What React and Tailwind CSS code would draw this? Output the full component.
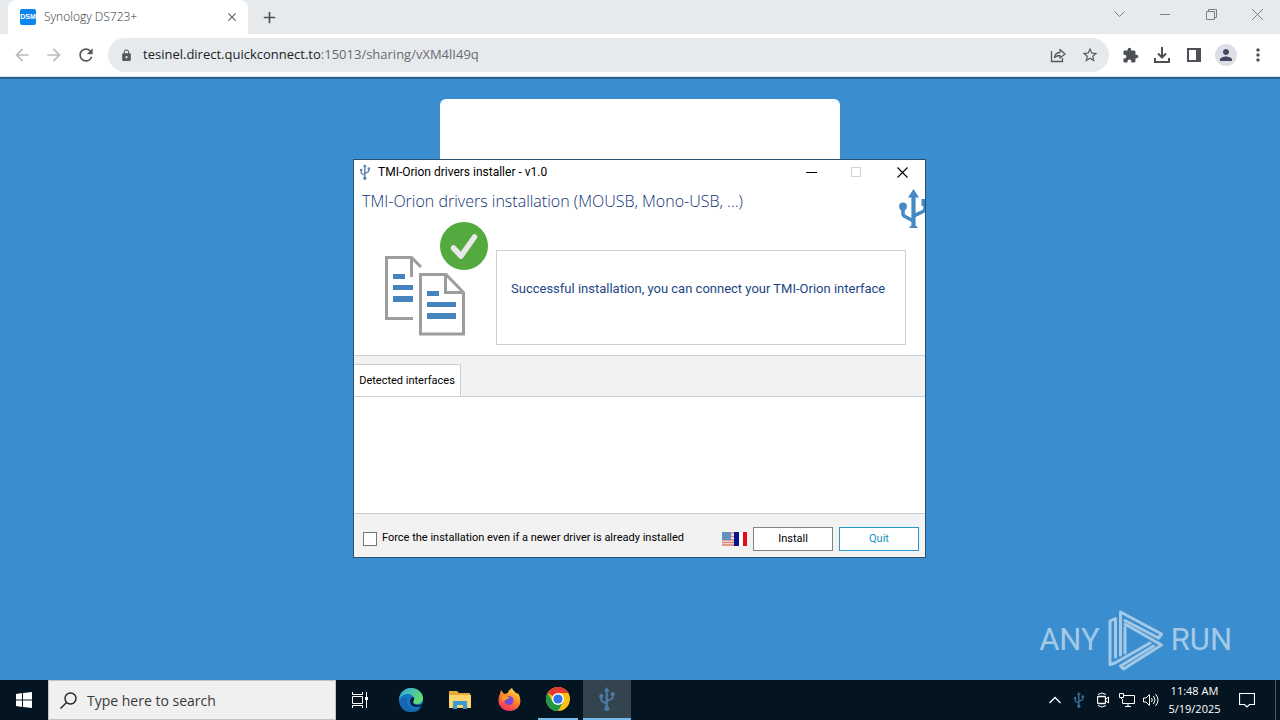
import { Plus } from 'lucide-react';
import {
  MdArrowBack, MdArrowForward, MdClose, MdExtension, MdLock, MdMoreVert, MdPerson, MdRefresh, MdStarBorder
} from 'react-icons/md';

const UsbIcon = ({ className, viewBox = '0 0 30 46' }) => (
  <svg className={className} viewBox={viewBox} fill="none" stroke="currentColor" strokeWidth="3.6">
    <path d="M14.500 7V40" strokeWidth="4.2" />
    <path d="M14.500 0l5.500 8.500H9z" fill="currentColor" stroke="none" />
    <path d="M4 18v6.500q0 2 2 3l8.500 4.500M26 16v3.500q0 2-2 3L14.500 27" />
    <circle cx="4" cy="17.500" r="3.900" fill="currentColor" stroke="none" />
    <path d="M22.500 10h7v7h-7z" fill="currentColor" stroke="none" />
    <circle cx="14.500" cy="41" r="4.800" fill="currentColor" stroke="none" />
  </svg>
);

const TabStrip = () => (
  <div className="flex h-[34px] bg-[#e7eaed] pl-2">
    <div className="flex w-[240px] items-center rounded-t-lg bg-white pl-3 pr-[9px]">
      <span className="flex size-4 items-center justify-center rounded-xs bg-[#0b84ee] font-['Liberation_Sans'] text-[7px] font-bold text-white">DSM</span>
      <span className="ml-2 flex-1 font-['Open_Sans',sans-serif] text-[12px] font-light text-[#303438]">Synology DS723+</span>
      <button aria-label="Close tab" className="text-[#5f6368]"><MdClose size={14} /></button>
    </div>
    <button aria-label="New tab" className="ml-[13px] text-[#4d5155]"><Plus size={17} strokeWidth={2.4} /></button>
    <div className="ml-auto flex h-7 items-stretch text-[#7d8084]">
      <button aria-label="Search tabs" className="flex w-[46px] items-center justify-center"><svg className="h-[6px] w-[11px]" viewBox="0 0 11 6"><path d="M.5 .5l5 5 5-5" fill="none" stroke="currentColor" /></svg></button>
      <button aria-label="Minimize" className="flex w-[46px] items-center justify-center"><svg className="size-[10px]" viewBox="0 0 10 10"><path d="M0 5.500h10" stroke="currentColor" /></svg></button>
      <button aria-label="Restore" className="flex w-[46px] items-center justify-center">
        <svg className="size-[11px]" viewBox="0 0 11 11" fill="none" stroke="currentColor"><path d="M.5 2.500h8v8h-8zM2.500 2.500v-2h8v8h-2" /></svg>
      </button>
      <button aria-label="Close" className="flex w-[46px] items-center justify-center"><svg className="size-[11px]" viewBox="0 0 11 11"><path d="M0 0l11 11M11 0L0 11" stroke="currentColor" /></svg></button>
    </div>
  </div>
);

const Toolbar = () => (
  <div className="flex h-[43px] items-center border-b border-[#d5e3ec] bg-white pl-3 pr-3">
    <button aria-label="Back" className="text-[#babcbe]"><MdArrowBack size={20} /></button>
    <button aria-label="Forward" className="ml-3 text-[#babcbe]"><MdArrowForward size={20} /></button>
    <button aria-label="Reload" className="ml-3 text-[#55595d]"><MdRefresh size={20} /></button>
    <div className="ml-3 flex h-[34px] flex-1 items-center rounded-full bg-[#e7eaed] pl-3 pr-[10px] text-[#55595d]">
      <MdLock size={13} />
      <div className="ml-[10px] flex-1 font-['Open_Sans',sans-serif] text-[13px] text-[#676b70]">
        <span className="text-[#202124]">tesinel.direct.quickconnect.to</span>:15013/sharing/vXM4lI49q
      </div>
      <button aria-label="Share">
        <svg className="size-4" viewBox="0 0 16 16" fill="none" stroke="currentColor" strokeWidth="1.3">
          <path d="M1.500 4v10.500h11V11" />
          <path d="M4.500 10.500c.5-3.500 2.500-5 5.500-5V2.500l5 4.500-5 4V8.500c-2.500 0-4 .5-5.500 2z" strokeLinejoin="round" />
        </svg>
      </button>
      <button aria-label="Bookmark" className="ml-[15px]"><MdStarBorder size={18} /></button>
    </div>
    <div className="ml-[13px] flex items-center text-[#4d5155]">
      <button aria-label="Extensions"><MdExtension size={17} /></button>
      <button aria-label="Downloads" className="ml-[15px]">
        <svg className="size-4" viewBox="0 0 16 16" fill="none" stroke="currentColor" strokeWidth="2"><path d="M8 0v10M4 6.500l4 4 4-4M1 11v4h14v-4" /></svg>
      </button>
      <button aria-label="Side panel" className="ml-[17px]">
        <svg className="size-[14px]" viewBox="0 0 14 14"><path d="M1 1h12v12H1z" fill="none" stroke="currentColor" strokeWidth="2" /><path d="M9 1h4v12H9z" fill="currentColor" /></svg>
      </button>
      <button aria-label="Profile" className="ml-[14px] flex size-[22px] items-center justify-center rounded-full bg-[#dcdfe6] text-[#42465e]"><MdPerson size={18} /></button>
      <button aria-label="Menu" className="ml-[11px]"><MdMoreVert size={20} /></button>
    </div>
  </div>
);

const DocsIcon = () => (
  <svg className="h-[116px] w-[104px]" viewBox="0 0 104 116" fill="none">
    <path d="M28 96.500H1.500v-61h25L36 45M26.500 36v19" stroke="#9d9d9d" strokeWidth="3" />
    <path d="M35.500 52.500h25.500l17.500 18v41.500h-43zM60.500 53v17.500h18" stroke="#9d9d9d" strokeWidth="3" />
    <path d="M8 52h12v5H8zM8 63h20v5H8zM8 74h20v6H8zM42 69h12v5H42zM42 80h29v5H42zM42 91h29v6H42z" fill="#4584be" />
    <circle cx="79" cy="24" r="24" fill="#54a93f" />
    <path d="M68.500 26l7.500 8L89.500 15" stroke="#e9e9e9" strokeWidth="5.500" strokeLinecap="round" strokeLinejoin="round" />
  </svg>
);

const Flags = () => (
  <svg className="h-[14px] w-[25px]" viewBox="0 0 25 14">
    <path d="M0 0h12v14H0z" fill="#f4e9e6" />
    <path d="M0 1h12M0 4.500h12M0 8h12M0 10.500h12M0 13h12" stroke="#dc8277" strokeWidth="1.300" />
    <path d="M0 0h9v8H0z" fill="#5f93bd" />
    <path d="M12 0h5v14h-5z" fill="#071689" />
    <path d="M17 0h4v14h-4z" fill="#fff" />
    <path d="M21 0h4v14h-4z" fill="#e90a17" />
  </svg>
);

const InstallerWindow = () => (
  <div className="absolute left-[353px] top-[159px] flex h-[399px] w-[573px] flex-col overflow-hidden border border-[#27506f] bg-white font-['Roboto',sans-serif] text-[11px] text-black">
    <div className="flex h-6 items-center pl-1 pr-[17px] text-[12px]">
      <UsbIcon className="h-4 w-[14px] text-[#5f83a8]" />
      <span className="ml-[6px] flex-1">TMI-Orion drivers installer - v1.0</span>
      <button aria-label="Minimize"><svg className="h-[11px] w-[11px]" viewBox="0 0 11 11"><path d="M0 5.500h11" stroke="currentColor" /></svg></button>
      <button aria-label="Maximize" disabled className="ml-[34px] text-[#cfcfcf]"><svg className="size-[11px]" viewBox="0 0 11 11"><path d="M.5 .5h9v9h-9z" fill="none" stroke="currentColor" /></svg></button>
      <button aria-label="Close" className="ml-[35px]"><svg className="size-[11px]" viewBox="0 0 11 11"><path d="M.5 .5l10 10M10.500 .5l-10 10" stroke="currentColor" strokeWidth="1.100" /></svg></button>
    </div>
    <div className="flex h-[38px] items-start justify-between pl-2">
      <h1 className="pt-[5px] font-['Open_Sans',sans-serif] text-[16px] font-light leading-6 text-[#0f3274]">TMI-Orion drivers installation (MOUSB, Mono-USB, ...)</h1>
      <UsbIcon className="mt-[5px] h-[39px] w-[26px] shrink-0 text-[#4789c4]" viewBox="0 0 26 39" />
    </div>
    <div className="flex h-[133px] pl-[31px] pr-[19px]">
      <DocsIcon />
      <div className="ml-[7px] mt-7 flex h-[95px] flex-1 items-center border border-[#cdd0d2] pb-[18px] pl-[14px] text-[13px] text-[#1c4686]">
        <p className="whitespace-nowrap">Successful installation, you can connect your TMI-Orion interface</p>
      </div>
    </div>
    <div className="flex h-[42px] items-end border-y border-[#c9d2d5] bg-[#f2f2f2]">
      <button className="-mb-px h-[33px] w-[107px] whitespace-nowrap border-r border-t border-[#cbcdce] border-b-[#c9d2d5] border-b bg-white pt-[2px]">Detected interfaces</button>
    </div>
    <div className="flex-1 bg-white" />
    <div className="flex h-11 items-center border-t border-[#c9cdcf] bg-[#f2f2f2] pl-[9px] pr-[6px] pt-[6px]">
      <label className="flex flex-1 items-center gap-[5px] whitespace-nowrap">
        <input type="checkbox" className="size-[14px] appearance-none border border-[#777] bg-white" />
        Force the installation even if a newer driver is already installed
      </label>
      <Flags />
      <button className="ml-[6px] h-6 w-20 border border-[#7b848a] bg-white pt-[2px]">Install</button>
      <button className="ml-[6px] h-6 w-20 border border-[#2798c8] bg-white pt-[2px] text-[#2590c0]">Quit</button>
    </div>
  </div>
);

const Watermark = () => (
  <div className="absolute bottom-[9px] right-[48px] flex h-[61px] items-center gap-2 font-['Roboto',sans-serif] text-[31px] text-[#a3c9e7]">
    <span>ANY</span>
    <svg className="h-[61px] w-[55px]" viewBox="0 0 55 61" fill="none" stroke="currentColor" strokeWidth="3" strokeLinejoin="round" strokeLinecap="round">
      <path d="M7.500 8.500L2 11v43.500l5-1.500 35-20M7.500 9v38" />
      <path d="M12.500 45V2L53.500 24l-3 4-33.500-17.500" />
      <path d="M17 17v26M17 14l36.500 21L15.500 59l-3-3 33-20" />
    </svg>
    <span>RUN</span>
  </div>
);

const EdgeIcon = () => (
  <svg className="size-6" viewBox="0 0 24 24">
    <defs>
      <linearGradient id="edgeTop" x1="0" y1="0" x2="1" y2=".5"><stop offset="0" stopColor="#2aa7e8" /><stop offset="1" stopColor="#62dc72" /></linearGradient>
    </defs>
    <circle cx="12" cy="12" r="12" fill="#1475c6" />
    <path d="M0 11C1 4 6 0 12 0c7 0 12 5 12 10 0 4-3 6-6 6-3 0-4-1-4-2s1-1 1-3c0-3-3-5-6-5-4 0-7 2-9 5z" fill="url(#edgeTop)" />
    <path d="M9 10c-3 5 1 12 8 12 2 0 4-1 5-2-2 3-6 4-10 4C5 24 1 19 1 14c2-5 5-5 8-4z" fill="#1765ad" />
    <path d="M14 14c0 2 2 3 5 3 2 0 4-1 5-2-1 3-3 4-6 4-5 0-7-3-7-6 0-2 2-4 3-4 2 1 1 3 0 5z" fill="#06213c" />
  </svg>
);

const FolderIcon = () => (
  <svg className="h-5 w-[22px]" viewBox="0 0 22 20">
    <path d="M0 1h8l2 2h11v15H0z" fill="#e7a83b" />
    <path d="M0 5h22v13H0z" fill="#fbd66f" />
    <path d="M4 19v-8h14v8h-4v-4H8v4z" fill="#3b9bd1" />
  </svg>
);

const FirefoxIcon = () => (
  <svg className="size-6" viewBox="0 0 24 24">
    <defs>
      <linearGradient id="fox" x1=".8" y1="0" x2=".3" y2="1"><stop offset="0" stopColor="#ffe34b" /><stop offset=".45" stopColor="#ff8a2a" /><stop offset="1" stopColor="#f02a62" /></linearGradient>
    </defs>
    <path d="M3 6l1-4 3 4 4-1c0-2 2-4 4-5 1 3 4 4 5 6l1-1c5 8 2 18-8 18S-1 14 3 6z" fill="url(#fox)" />
    <circle cx="12" cy="12.500" r="4.500" fill="#7548d7" />
    <path d="M5 8c3-1 6 0 8 2-2 0-3 1-4 2l-4 1z" fill="#ff9a25" />
  </svg>
);

const ChromeIcon = () => (
  <svg className="size-6" viewBox="0 0 24 24">
    <circle cx="12" cy="12" r="12" fill="#fbc116" />
    <path d="M12 12L1.600 6A12 12 0 0 1 22.400 6H12z" fill="#e33b2e" />
    <path d="M1.600 6A12 12 0 0 0 12 24l5.200-9L12 12 6.800 15z" fill="#229847" />
    <circle cx="12" cy="12" r="6" fill="#fff" />
    <circle cx="12" cy="12" r="4.600" fill="#3076ea" />
  </svg>
);

const Taskbar = () => (
  <div className="flex h-10 shrink-0 bg-[#041521] text-white">
    <button aria-label="Start" className="flex w-12 items-center justify-center">
      <svg className="size-4" viewBox="0 0 16 16" fill="currentColor"><path d="M0 2l6-1v6.500H0zM7 1l9-1v7.500H7zM0 8.500h6V15l-6-1zM7 8.500h9V16l-9-1z" /></svg>
    </button>
    <div className="flex w-[288px] items-center border border-[#bfc4c6] bg-[#f0f0f0] pl-[11px] text-[#222]">
      <svg className="size-[17px]" viewBox="0 0 17 17" fill="none" stroke="currentColor" strokeWidth="1.400"><circle cx="10.500" cy="6.500" r="5.500" /><path d="M6.500 10.500L.5 16.500" /></svg>
      <input aria-label="Search" placeholder="Type here to search" className="ml-[10px] w-[220px] bg-transparent font-['Open_Sans',sans-serif] text-[14px] outline-none placeholder:text-[#3a3a3a]" />
    </div>
    <button aria-label="Task view" className="flex w-12 items-center justify-center">
      <svg className="size-4" viewBox="0 0 16 16" fill="none" stroke="currentColor"><path d="M.5 0v2.500h10V0M.5 4.500h10v7H.5zM.5 16v-2.500h10V16M14.500 0v16" /><path d="M13 5h3v3h-3z" fill="currentColor" stroke="none" /></svg>
    </button>
    <button aria-label="Edge" className="ml-[3px] flex w-12 items-center justify-center"><EdgeIcon /></button>
    <button aria-label="Files" className="ml-px flex w-12 items-center justify-center"><FolderIcon /></button>
    <button aria-label="Firefox" className="ml-px flex w-12 items-center justify-center"><FirefoxIcon /></button>
    <button aria-label="Chrome" className="ml-px flex w-12 items-center justify-center px-1"><span className="flex h-10 w-10 items-center justify-center border-b-2 border-[#76b9ed]"><ChromeIcon /></span></button>
    <button aria-label="Installer" className="ml-px flex w-12 items-center justify-center border-b-2 border-[#76b9ed] bg-[#34444e]"><UsbIcon className="h-6 w-4 text-[#4b7ba8]" /></button>
    <div className="ml-auto flex items-center">
      <button aria-label="Hidden icons"><svg className="h-[8px] w-[12px]" viewBox="0 0 12 8"><path d="M.5 7L6 1.500 11.500 7" fill="none" stroke="currentColor" strokeWidth="1.300" /></svg></button>
      <UsbIcon className="ml-[12px] h-4 w-3 text-[#3c6c93]" />
      <svg className="ml-3 h-4 w-3" viewBox="0 0 12 16" fill="none" stroke="currentColor"><path d="M1 2.500Q5 -.5 9 2.500M1 13.500q4 3 8 0" /><rect x=".5" y="4.500" width="8" height="7" rx="1" strokeWidth="1.300" /><path d="M9 7l2.500-2v6L9 9" /></svg>
      <svg className="ml-[10px] h-[14px] w-4" viewBox="0 0 16 14" fill="none" stroke="currentColor"><path d="M5 2.500h10.500v8H3.500V6M9 10.500v3M6 13.500h6M.5 .5h4v4h-4zM2.500 4.500V6" /></svg>
      <svg className="ml-2 h-[14px] w-4" viewBox="0 0 16 14" fill="none" stroke="currentColor"><path d="M.5 5v4h2.500l3.500 3.500v-11L3 5zM8.500 5q1.500 2 0 4M10.500 3q3 4 0 8M12.500 1q5 6 0 12" /></svg>
      <div className="ml-[9px] w-[53px] whitespace-nowrap text-center font-['Open_Sans',sans-serif] text-[11px] leading-[18px]">
        <div>11:48 AM</div>
        <div>5/19/2025</div>
      </div>
      <button aria-label="Notifications" className="ml-[18px]"><svg className="size-4" viewBox="0 0 16 16" fill="none" stroke="currentColor" strokeWidth="1.200"><path d="M.5 1.500h15v11h-5L8 15l-2.500-2.500h-5z" /></svg></button>
      <div className="ml-5 h-10 w-[5px] border-l border-[#4d5a63]" />
    </div>
  </div>
);

export default function App() {
  return (
    <div className="relative flex h-screen flex-col overflow-hidden">
      <TabStrip />
      <Toolbar />
      <div className="relative flex-1 border-t-2 border-[#2e6189] bg-[#3a8ecf]">
        <div className="mx-auto mt-5 h-[420px] w-[400px] rounded-md bg-white" />
        <Watermark />
      </div>
      <InstallerWindow />
      <Taskbar />
    </div>
  );
}
